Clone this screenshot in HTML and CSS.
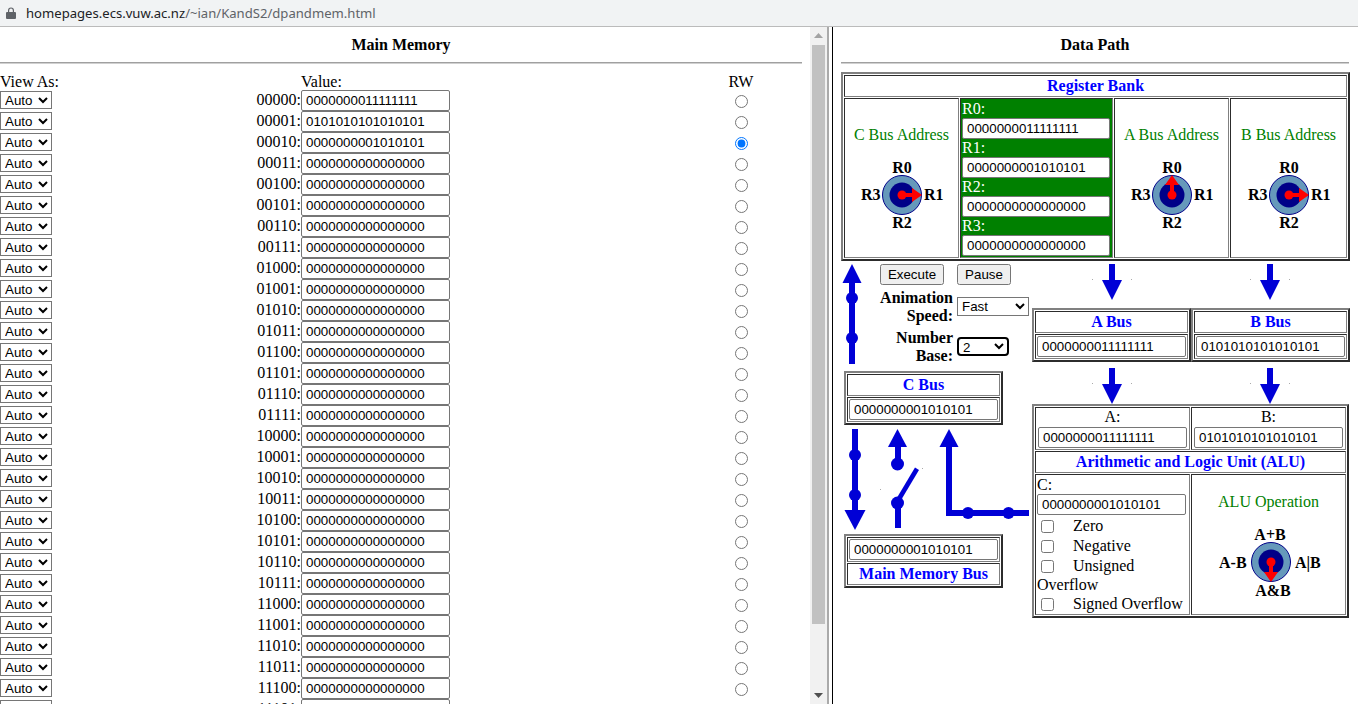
FILE: index.html
```html
<!DOCTYPE html>
<html>
<head>
<meta charset="utf-8">
<title>Data Path and Main Memory</title>
<link rel="stylesheet" href="styles.css">
</head>
<body>

<div class="urlbar">
  <svg class="lock" width="10" height="12" viewBox="0 0 10 12"><path d="M1 5h8a1 1 0 0 1 1 1v5a1 1 0 0 1-1 1H1a1 1 0 0 1-1-1V6a1 1 0 0 1 1-1zM2 5V3.400a3 3 0 0 1 6 0V5H6.800V3.400a1.800 1.800 0 0 0-3.600 0V5z" fill="#5f6368"/></svg>
  <span class="url">homepages.ecs.vuw.ac.nz<span class="url-path">/~ian/KandS2/dpandmem.html</span></span>
</div>

<svg class="defs" width="0" height="0">
  <defs>
    <g id="rface">
      <circle cx="45" cy="36" r="19.500" fill="#6699bb" stroke="#000088"/>
      <circle cx="45" cy="36" r="12.500" fill="#000088"/>
      <text class="dial-text" x="45" y="14" text-anchor="middle">R0</text>
      <text class="dial-text" x="45" y="69" text-anchor="middle">R2</text>
      <text class="dial-text" x="4" y="41">R3</text>
      <text class="dial-text" x="67" y="41">R1</text>
    </g>
    <g id="pointer">
      <circle cx="45" cy="36" r="4.500" fill="#ff0000"/>
      <path d="M45 34h10v-5l10 7-10 7v-5h-10z" fill="#ff0000"/>
    </g>
    <g id="arrow">
      <rect x="18" y="0" width="6" height="18" fill="#0000d6"/>
      <path d="M11 16h20l-10 20z" fill="#0000d6"/>
      <rect x="1" y="15" width="1" height="1" fill="#aaaaaa"/>
      <rect x="40" y="15" width="1" height="1" fill="#aaaaaa"/>
    </g>
  </defs>
</svg>

<div class="frames">

  <div class="memframe">
    <div class="frame-title">Main Memory</div>
    <hr class="rule">
    <div class="memgrid">
      <div class="mem-head">View As:</div><div></div><div class="mem-head">Value:</div><div class="mem-head rw">RW</div>
      <select class="viewas"><option>Auto</option></select><div class="addr">00000:</div><input class="word" value="0000000011111111"><div class="rw"><input type="radio" name="rw"></div>
      <select class="viewas"><option>Auto</option></select><div class="addr">00001:</div><input class="word" value="0101010101010101"><div class="rw"><input type="radio" name="rw"></div>
      <select class="viewas"><option>Auto</option></select><div class="addr">00010:</div><input class="word" value="0000000001010101"><div class="rw"><input type="radio" name="rw" checked></div>
      <select class="viewas"><option>Auto</option></select><div class="addr">00011:</div><input class="word" value="0000000000000000"><div class="rw"><input type="radio" name="rw"></div>
      <select class="viewas"><option>Auto</option></select><div class="addr">00100:</div><input class="word" value="0000000000000000"><div class="rw"><input type="radio" name="rw"></div>
      <select class="viewas"><option>Auto</option></select><div class="addr">00101:</div><input class="word" value="0000000000000000"><div class="rw"><input type="radio" name="rw"></div>
      <select class="viewas"><option>Auto</option></select><div class="addr">00110:</div><input class="word" value="0000000000000000"><div class="rw"><input type="radio" name="rw"></div>
      <select class="viewas"><option>Auto</option></select><div class="addr">00111:</div><input class="word" value="0000000000000000"><div class="rw"><input type="radio" name="rw"></div>
      <select class="viewas"><option>Auto</option></select><div class="addr">01000:</div><input class="word" value="0000000000000000"><div class="rw"><input type="radio" name="rw"></div>
      <select class="viewas"><option>Auto</option></select><div class="addr">01001:</div><input class="word" value="0000000000000000"><div class="rw"><input type="radio" name="rw"></div>
      <select class="viewas"><option>Auto</option></select><div class="addr">01010:</div><input class="word" value="0000000000000000"><div class="rw"><input type="radio" name="rw"></div>
      <select class="viewas"><option>Auto</option></select><div class="addr">01011:</div><input class="word" value="0000000000000000"><div class="rw"><input type="radio" name="rw"></div>
      <select class="viewas"><option>Auto</option></select><div class="addr">01100:</div><input class="word" value="0000000000000000"><div class="rw"><input type="radio" name="rw"></div>
      <select class="viewas"><option>Auto</option></select><div class="addr">01101:</div><input class="word" value="0000000000000000"><div class="rw"><input type="radio" name="rw"></div>
      <select class="viewas"><option>Auto</option></select><div class="addr">01110:</div><input class="word" value="0000000000000000"><div class="rw"><input type="radio" name="rw"></div>
      <select class="viewas"><option>Auto</option></select><div class="addr">01111:</div><input class="word" value="0000000000000000"><div class="rw"><input type="radio" name="rw"></div>
      <select class="viewas"><option>Auto</option></select><div class="addr">10000:</div><input class="word" value="0000000000000000"><div class="rw"><input type="radio" name="rw"></div>
      <select class="viewas"><option>Auto</option></select><div class="addr">10001:</div><input class="word" value="0000000000000000"><div class="rw"><input type="radio" name="rw"></div>
      <select class="viewas"><option>Auto</option></select><div class="addr">10010:</div><input class="word" value="0000000000000000"><div class="rw"><input type="radio" name="rw"></div>
      <select class="viewas"><option>Auto</option></select><div class="addr">10011:</div><input class="word" value="0000000000000000"><div class="rw"><input type="radio" name="rw"></div>
      <select class="viewas"><option>Auto</option></select><div class="addr">10100:</div><input class="word" value="0000000000000000"><div class="rw"><input type="radio" name="rw"></div>
      <select class="viewas"><option>Auto</option></select><div class="addr">10101:</div><input class="word" value="0000000000000000"><div class="rw"><input type="radio" name="rw"></div>
      <select class="viewas"><option>Auto</option></select><div class="addr">10110:</div><input class="word" value="0000000000000000"><div class="rw"><input type="radio" name="rw"></div>
      <select class="viewas"><option>Auto</option></select><div class="addr">10111:</div><input class="word" value="0000000000000000"><div class="rw"><input type="radio" name="rw"></div>
      <select class="viewas"><option>Auto</option></select><div class="addr">11000:</div><input class="word" value="0000000000000000"><div class="rw"><input type="radio" name="rw"></div>
      <select class="viewas"><option>Auto</option></select><div class="addr">11001:</div><input class="word" value="0000000000000000"><div class="rw"><input type="radio" name="rw"></div>
      <select class="viewas"><option>Auto</option></select><div class="addr">11010:</div><input class="word" value="0000000000000000"><div class="rw"><input type="radio" name="rw"></div>
      <select class="viewas"><option>Auto</option></select><div class="addr">11011:</div><input class="word" value="0000000000000000"><div class="rw"><input type="radio" name="rw"></div>
      <select class="viewas"><option>Auto</option></select><div class="addr">11100:</div><input class="word" value="0000000000000000"><div class="rw"><input type="radio" name="rw"></div>
      <select class="viewas"><option>Auto</option></select><div class="addr">11101:</div><input class="word" value="0000000000000000"><div class="rw"><input type="radio" name="rw"></div>
    </div>
  </div>

  <div class="scrollbar">
    <svg class="sb-arrow" width="9" height="5" viewBox="0 0 9 5"><path d="M4.500 0l4.500 5H0z" fill="#a3a3a3"/></svg>
    <div class="sb-thumb"></div>
    <svg class="sb-arrow" width="9" height="5" viewBox="0 0 9 5"><path d="M0 0h9L4.500 5z" fill="#505050"/></svg>
  </div>
  <div class="divider"></div>

  <div class="dpframe">
    <div class="frame-title">Data Path</div>
    <hr class="rule">

    <table class="box regbank">
      <colgroup><col class="col-c"><col class="col-regs"><col class="col-a"><col class="col-b"></colgroup>
      <tr><td colspan="4" class="box-title">Register Bank</td></tr>
      <tr>
        <td class="dialcell">
          <div class="dial-label">C Bus Address</div>
          <svg class="dial" width="90" height="74" viewBox="0 0 90 74"><use href="#rface"/><use href="#pointer"/></svg>
        </td>
        <td class="regs">
          <div class="reg-label">R0:</div><input class="word" value="0000000011111111">
          <div class="reg-label">R1:</div><input class="word" value="0000000001010101">
          <div class="reg-label">R2:</div><input class="word" value="0000000000000000">
          <div class="reg-label">R3:</div><input class="word" value="0000000000000000">
        </td>
        <td class="dialcell">
          <div class="dial-label">A Bus Address</div>
          <svg class="dial" width="90" height="74" viewBox="0 0 90 74"><use href="#rface"/><use href="#pointer" transform="rotate(-90 45 36)"/></svg>
        </td>
        <td class="dialcell">
          <div class="dial-label">B Bus Address</div>
          <svg class="dial" width="90" height="74" viewBox="0 0 90 74"><use href="#rface"/><use href="#pointer"/></svg>
        </td>
      </tr>
    </table>

    <div class="lower">
      <div class="lower-left">
        <div class="controls-row">
          <svg class="wire-up" width="20" height="100" viewBox="0 0 20 100">
            <path d="M10 0l9.500 19H.5z" fill="#0000d6"/>
            <rect x="7" y="17" width="6" height="83" fill="#0000d6"/>
            <circle cx="10" cy="34" r="6" fill="#0000d6"/>
            <circle cx="10" cy="74" r="6" fill="#0000d6"/>
          </svg>
          <div class="controls">
            <div class="buttons">
              <button class="btn btn-exec">Execute</button>
              <button class="btn btn-pause">Pause</button>
            </div>
            <div class="setting">
              <div class="setting-label">Animation<br>Speed:</div>
              <select class="speed"><option>Fast</option></select>
            </div>
            <div class="setting">
              <div class="setting-label">Number<br>Base:</div>
              <select class="base"><option>2</option></select>
            </div>
          </div>
        </div>

        <table class="box bus cbus">
          <tr><td class="box-title">C Bus</td></tr>
          <tr><td class="bus-value"><input class="word" value="0000000001010101"></td></tr>
        </table>

        <svg class="wires" width="191" height="102" viewBox="841 429 191 102">
          <g fill="#0000d6">
            <rect x="852" y="429" width="6" height="84"/>
            <path d="M844.500 510h21l-10.500 20z"/>
            <circle cx="855" cy="455" r="6"/>
            <circle cx="855" cy="495" r="6"/>
            <path d="M897.500 429l9.500 18h-19z"/>
            <rect x="895" y="445" width="6" height="18"/>
            <circle cx="897.500" cy="464" r="6.500"/>
            <path d="M895 501l20-33.500 4 2.500-20 33.500z"/>
            <rect x="895" y="503" width="6" height="25"/>
            <circle cx="897.500" cy="503" r="6.500"/>
            <path d="M949 429l9.500 18h-19z"/>
            <rect x="946" y="445" width="6" height="71"/>
            <rect x="946" y="510" width="83" height="6"/>
            <circle cx="968" cy="513" r="6"/>
            <circle cx="1008.500" cy="513" r="6"/>
          </g>
          <rect x="880" y="489" width="1" height="1" fill="#aaaaaa"/>
          <rect x="922" y="468" width="1" height="1" fill="#aaaaaa"/>
        </svg>

        <table class="box bus membus">
          <tr><td class="bus-value"><input class="word" value="0000000001010101"></td></tr>
          <tr><td class="box-title">Main Memory Bus</td></tr>
        </table>
      </div>

      <div class="lower-right">
        <div class="arrows arrows-top">
          <svg width="41" height="36" viewBox="0 0 41 36"><use href="#arrow"/></svg>
          <svg width="41" height="36" viewBox="0 0 41 36"><use href="#arrow"/></svg>
        </div>
        <div class="busrow">
          <table class="box bus">
            <tr><td class="box-title">A Bus</td></tr>
            <tr><td class="bus-value"><input class="word" value="0000000011111111"></td></tr>
          </table>
          <table class="box bus">
            <tr><td class="box-title">B Bus</td></tr>
            <tr><td class="bus-value"><input class="word" value="0101010101010101"></td></tr>
          </table>
        </div>
        <div class="arrows arrows-mid">
          <svg width="41" height="36" viewBox="0 0 41 36"><use href="#arrow"/></svg>
          <svg width="41" height="36" viewBox="0 0 41 36"><use href="#arrow"/></svg>
        </div>

        <table class="box alu">
          <tr>
            <td class="operand">A:<br><input class="word" value="0000000011111111"></td>
            <td class="operand">B:<br><input class="word" value="0101010101010101"></td>
          </tr>
          <tr><td colspan="2" class="box-title">Arithmetic and Logic Unit (ALU)</td></tr>
          <tr>
            <td class="result">
              <div>C:</div>
              <input class="word" value="0000000001010101">
              <label class="flag"><input type="checkbox">Zero</label>
              <label class="flag"><input type="checkbox">Negative</label>
              <label class="flag"><input type="checkbox">Unsigned</label>
              <div class="flag-head">Overflow</div>
              <label class="flag"><input type="checkbox">Signed Overflow</label>
            </td>
            <td class="dialcell opcell">
              <div class="dial-label">ALU Operation</div>
              <svg class="dial" width="110" height="80" viewBox="0 0 110 80">
                <circle cx="57" cy="39" r="19.500" fill="#6699bb" stroke="#000088"/>
                <circle cx="57" cy="39" r="12.500" fill="#000088"/>
                <text class="dial-text" x="56" y="17" text-anchor="middle">A+B</text>
                <text class="dial-text" x="59" y="73" text-anchor="middle">A&amp;B</text>
                <text class="dial-text" x="5" y="45">A-B</text>
                <text class="dial-text" x="81" y="45">A|B</text>
                <use href="#pointer" transform="translate(12 3) rotate(90 45 36)"/>
              </svg>
            </td>
          </tr>
        </table>
      </div>
    </div>
  </div>

</div>

</body>
</html>
```

FILE: styles.css
```css
html, body {margin:0; height:100%; overflow:hidden; background-color:#FFFFFF;}
body {display:flex; flex-direction:column; font-family:"Liberation Serif", serif; font-size:16px; color:#000000;}

.urlbar {display:flex; align-items:center; flex:none; height:26px; padding-left:6px; background-color:#F1F3F4; border-bottom:1px solid #BBBBBB;}
.lock {margin-right:10px;}
.url {font-family:"Noto Sans", sans-serif; font-size:13.1px; color:#202124;}
.url-path {color:#5F6368;}
.defs {position:absolute;}

.frames {display:flex; flex:1; min-height:0;}
.memframe {flex:none; width:802px; margin-right:8px; overflow:hidden;}
.frame-title {margin-top:9px; font-weight:bold; text-align:center; line-height:18px;}
.rule {height:0; margin:8px 0 0; border:0; border-top:1px solid #A0A0A0; border-bottom:1px solid #D0D0D0;}

.memgrid {display:grid; grid-template-columns:52px 249px 379px 122px; grid-auto-rows:21px; margin-top:5px;}
.mem-head {line-height:21px; height:17px; white-space:nowrap; margin-top:2px;}
.viewas {align-self:start; width:52px; height:18px; margin-top:1px; padding:0; font:13.33px "Liberation Sans", sans-serif; background-color:#FFFFFF;}
.addr {line-height:20px; text-align:right;}
.rw {text-align:center;}
.rw input {margin:5px 0 0;}
.word {box-sizing:border-box; width:149px; height:21px; margin:0; padding:1px 4px; border:1px solid #767676; border-radius:2px; font:13.33px "Liberation Sans", sans-serif; color:#000000;}

.scrollbar {display:flex; flex:none; flex-direction:column; align-items:center; width:17px; background-color:#F1F1F1;}
.sb-arrow {flex:none; margin:6px 0;}
.sb-thumb {width:13px; height:579px; margin-top:1px; background-color:#C1C1C1;}
.scrollbar .sb-arrow:last-child {margin-top:auto;}
.divider {flex:none; width:3px; border-left:2px solid #AAAAAA; border-right:1px solid #000000; background-color:#FFFFFF;}

.dpframe {flex:none; width:508px; margin-left:8px;}

.box {border-collapse:separate; border-spacing:1px; border:2px outset #808080; table-layout:fixed;}
.box td {border:1px inset #808080; padding:1px;}
.box-title {height:18px; color:#0000FF; font-weight:bold; text-align:center;}

.regbank {width:509px; margin-top:8px;}
.col-c {width:115px;}
.col-regs {width:153px;}
.col-a {width:115px;}
.col-b {width:117px;}
.box td.dialcell {padding:2px 0 0; text-align:center; vertical-align:middle;}
.dial-label {color:#008000; line-height:18px;}
.dial {display:block; margin:15px auto 0;}
.dial-text {font:bold 16px "Liberation Serif", serif; fill:#000000;}
.box td.regs {background-color:#008000; color:#FFFFFF;}
.reg-label {line-height:18px; height:18px;}
.regs .word {display:block; width:148px;}

.lower {display:flex; margin-top:-1px;}
.lower-left {flex:none; width:191px;}
.lower-right {flex:none; width:318px;}

.controls-row {display:flex; align-items:flex-start; padding:4px 0 0 1px;}
.controls {flex:1;}
.buttons {display:flex; gap:13px; padding-left:18px;}
.btn {box-sizing:border-box; height:21px; padding:0; font:13.33px "Liberation Sans", sans-serif;}
.btn-exec {width:64px;}
.btn-pause {width:54px;}
.setting {display:flex; align-items:flex-start; gap:4px; margin-top:4px;}
.setting-label {width:91px; font-weight:bold; line-height:18px; text-align:right;}
.speed, .base {height:19px; margin-top:8px; padding:0; font:13.33px "Liberation Sans", sans-serif; background-color:#FFFFFF;}
.speed {width:72px;}
.base {width:52px; border:2px solid #000000; border-radius:4px;}

.bus {width:159px;}
.box td.bus-value {padding:1px;}
.bus-value .word {display:block;}
.cbus {margin:6px 0 0 3px;}
.wires {display:block; margin-top:4px;}
.membus {margin:3px 0 0 3px;}

.arrows {display:flex; justify-content:space-around; width:316px; height:36px;}
.arrows-top {margin:4px 0 8px;}
.arrows-mid {margin:6px 0 0;}
.busrow {display:flex;}
.busrow .bus {flex:none;}

.alu {width:317px;}
.box td.operand {padding:0 1px 1px; text-align:center; line-height:18px;}
.operand .word {display:block; margin:1px auto 0;}
.box td.result {padding:1px 1px 0; line-height:18px; vertical-align:top;}
.result .word {display:block; margin-bottom:1px;}
.flag {display:flex; align-items:center; height:20px; white-space:nowrap;}
.flag input {flex:none; width:13px; height:13px; margin:0 19px 0 4px;}
.flag-head {line-height:18px;}
.box td.opcell {padding:18px 0 0; vertical-align:top;}
.opcell .dial {margin-top:12px;}
```
